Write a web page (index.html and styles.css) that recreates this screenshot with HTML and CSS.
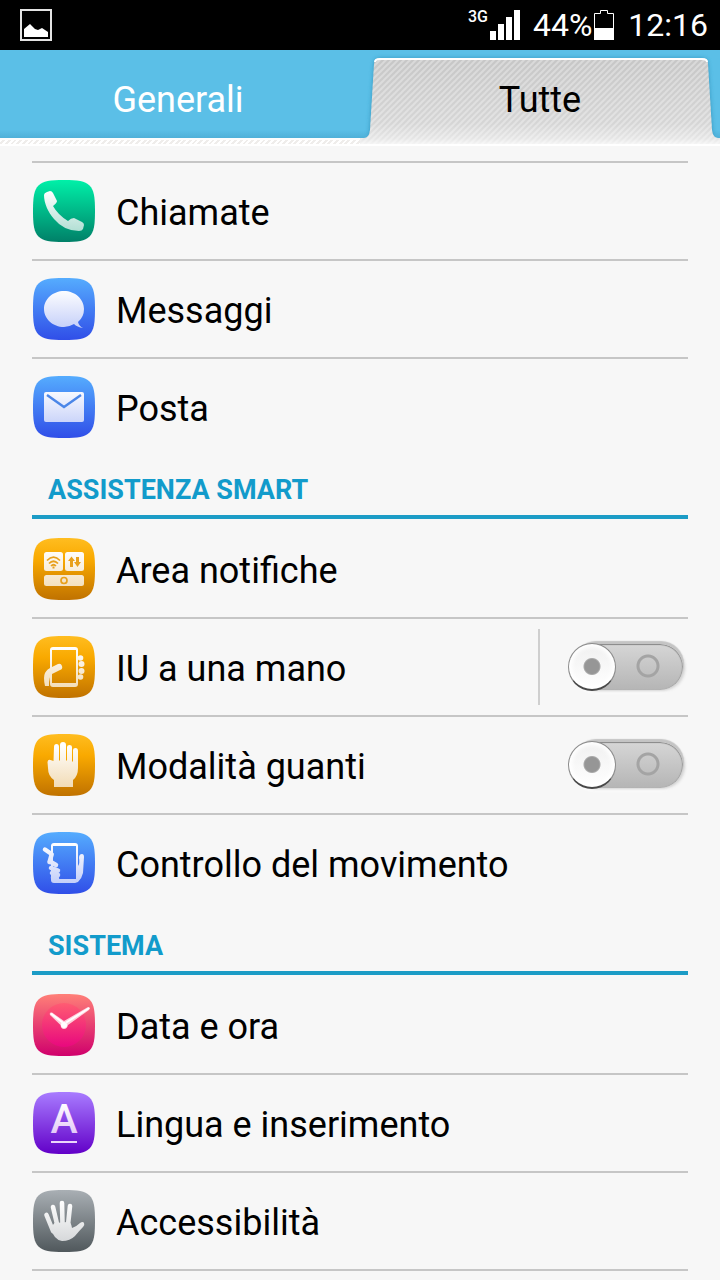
FILE: index.html
```html
<!DOCTYPE html>
<html lang="it">
<head>
<meta charset="utf-8">
<meta name="viewport" content="width=device-width, initial-scale=1">
<title>Impostazioni</title>
<link rel="stylesheet" href="styles.css">
</head>
<body>
<svg class="defs" aria-hidden="true">
  <defs>
    <linearGradient id="green" x2="0" y2="1"><stop stop-color="#00f0a8"/><stop offset="1" stop-color="#008068"/></linearGradient>
    <linearGradient id="blue" x2="0" y2="1"><stop stop-color="#55acfe"/><stop offset="1" stop-color="#304ee8"/></linearGradient>
    <linearGradient id="amber" x2="0" y2="1"><stop stop-color="#ffbd20"/><stop offset=".35" stop-color="#f9a900"/><stop offset="1" stop-color="#c07200"/></linearGradient>
    <linearGradient id="pink" x2="0" y2="1"><stop stop-color="#ff8078"/><stop offset="1" stop-color="#d0006c"/></linearGradient>
    <linearGradient id="dial" x2="0" y2="1"><stop stop-color="#ff5c72"/><stop offset="1" stop-color="#e8087e"/></linearGradient>
    <linearGradient id="violet" x2="0" y2="1"><stop stop-color="#a87cff"/><stop offset="1" stop-color="#6200c8"/></linearGradient>
    <linearGradient id="slate" x2="0" y2="1"><stop stop-color="#a9afb4"/><stop offset="1" stop-color="#50585c"/></linearGradient>
    <linearGradient id="mint" gradientUnits="userSpaceOnUse" x1="0" y1="11" x2="0" y2="51"><stop stop-color="#fff"/><stop offset="1" stop-color="#b2dfd4"/></linearGradient>
    <linearGradient id="sky" gradientUnits="userSpaceOnUse" x1="0" y1="11" x2="0" y2="51"><stop stop-color="#fff"/><stop offset="1" stop-color="#c4cff9"/></linearGradient>
    <linearGradient id="cream" gradientUnits="userSpaceOnUse" x1="0" y1="11" x2="0" y2="53"><stop stop-color="#fff"/><stop offset="1" stop-color="#f2dcb6"/></linearGradient>
    <linearGradient id="lilac" gradientUnits="userSpaceOnUse" x1="0" y1="11" x2="0" y2="51"><stop stop-color="#fff"/><stop offset="1" stop-color="#dcb8f5"/></linearGradient>
    <linearGradient id="silver" gradientUnits="userSpaceOnUse" x1="0" y1="11" x2="0" y2="51"><stop stop-color="#fff"/><stop offset="1" stop-color="#d6d8da"/></linearGradient>
    <symbol id="tile" viewBox="0 0 62 62"><path d="M31 0C45 0 52 1 56.500 5.500C61 10 62 17 62 31S61 52 56.500 56.500C52 61 45 62 31 62S10 61 5.500 56.500C1 52 0 45 0 31S1 10 5.500 5.500C10 1 17 0 31 0Z"/></symbol>
  </defs>
</svg>

<header>
  <div class="status">
    <svg class="picture" viewBox="0 0 32 32" aria-hidden="true"><rect x="1" y="1" width="30" height="30" fill="none" stroke="#e4e4e4" stroke-width="2"/><path fill="#fff" d="M4 28V20L10 15L15 20L18 21L22 19L28 23V28Z"/></svg>
    <div class="status-right">
      <span class="network">3G</span>
      <svg class="signal" viewBox="0 0 30 30" fill="#fff" aria-hidden="true"><path d="M0 21h6v9H0zM8 14h6v16H8zM16 7h6v23h-6zM24 0h6v30h-6z"/></svg>
      <span class="percent">44%</span>
      <svg class="battery" viewBox="0 0 20 30" aria-hidden="true"><path d="M.5 3.500H6.500V.5H13.500V3.500H19.500V29.500H.5Z" fill="none" stroke="#fff"/><path d="M0 18h20v12H0z" fill="#fff"/></svg>
      <time>12:16</time>
    </div>
  </div>
  <nav class="tabs">
    <button class="tab tab-general">Generali</button>
    <button class="tab tab-all" aria-current="page">
      <svg class="tab-shape" viewBox="0 0 360 96" preserveAspectRatio="none" aria-hidden="true">
        <defs>
          <linearGradient id="tabfill" x2="0" y2="1"><stop stop-color="#c6c6c6"/><stop offset=".75" stop-color="#d6d6d6"/><stop offset=".92" stop-color="#e6e6e6"/><stop offset="1" stop-color="#fafafa"/></linearGradient>
          <pattern id="weave" width="6" height="6" patternUnits="userSpaceOnUse"><path d="M-1 7L7 -1M-1 1L1 -1M5 7L7 5" stroke="#fff" stroke-opacity=".32" stroke-width="2"/></pattern>
          <filter id="soft" x="-10%" y="-10%" width="120%" height="120%"><feGaussianBlur stdDeviation="2"/></filter>
        </defs>
        <path d="M9 88L14 14Q14 8 20 8H342Q348 8 348 14L353 88Z" fill="#2787ae" opacity=".65" filter="url(#soft)"/>
        <path d="M0 88H4Q9 88 10 80L14 14Q14 8 20 8H342Q348 8 348 14L352 80Q353 88 358 88H360V96H0Z" fill="url(#tabfill)"/>
        <path d="M0 88H4Q9 88 10 80L14 14Q14 8 20 8H342Q348 8 348 14L352 80Q353 88 358 88H360V96H0Z" fill="url(#weave)"/>
        <path d="M15 12Q15 9 20 9H342Q347 9 347 12" fill="none" stroke="#fff" stroke-width="2"/>
        <path d="M0 95H360" stroke="#fff" stroke-width="2"/>
      </svg>
      <span class="tab-label">Tutte</span>
    </button>
  </nav>
</header>

<main>
  <section class="group group-first">
    <ul>
      <li class="row"><a class="entry" href="#chiamate">
        <svg class="icon" viewBox="0 0 62 62" aria-hidden="true"><use href="#tile" fill="url(#green)"/><path fill="url(#mint)" d="M14 12L17 11Q19 11 20 13L24 21Q24 23 20 26Q25 35 35 41Q38 38 41 38L49 42Q51 43 51 45L50 49Q49 51 46 51Q31 51 21 39C15 32 11 23 11 15Q11 13 14 12Z"/></svg>
        <span>Chiamate</span></a></li>
      <li class="row"><a class="entry" href="#messaggi">
        <svg class="icon" viewBox="0 0 62 62" aria-hidden="true"><use href="#tile" fill="url(#blue)"/><path fill="url(#sky)" d="M31 13C42 13 51 21 51 31Q51 39 45 44Q46 48 50 50Q44 49 41 46Q36 49 31 49C20 49 11 41 11 31S20 13 31 13Z"/></svg>
        <span>Messaggi</span></a></li>
      <li class="row"><a class="entry" href="#posta">
        <svg class="icon" viewBox="0 0 62 62" aria-hidden="true"><use href="#tile" fill="url(#blue)"/><rect x="11" y="16" width="40" height="30" rx="2" fill="url(#sky)"/><path d="M14 19L31 31L48 19" fill="none" stroke="#4b86e8" stroke-width="2.400"/></svg>
        <span>Posta</span></a></li>
    </ul>
  </section>

  <section class="group">
    <h2>ASSISTENZA SMART</h2>
    <ul>
      <li class="row"><a class="entry" href="#notifiche">
        <svg class="icon" viewBox="0 0 62 62" aria-hidden="true"><use href="#tile" fill="url(#amber)"/><g fill="url(#cream)"><rect x="11" y="14" width="19" height="19" rx="2.500"/><rect x="32" y="14" width="19" height="19" rx="2.500"/><rect x="11" y="37" width="40" height="11" rx="2.500"/></g><g fill="none" stroke="#e8a01c" stroke-width="1.700"><path d="M14 22.500Q20.500 16 27 22.500M16 25.500Q20.500 21 25 25.500M18 28Q20.500 25.500 23 28"/><circle cx="31" cy="42.500" r="3"/></g><path fill="#e8a01c" d="M19.500 28.500h2v2h-2zM38.500 18.500L42 23H40V29H37V23H35ZM44.500 29L48 24H46V19H43V24H41Z"/></svg>
        <span>Area notifiche</span></a></li>
      <li class="row"><a class="entry" href="#mano">
        <svg class="icon" viewBox="0 0 62 62" aria-hidden="true"><use href="#tile" fill="url(#amber)"/><path fill="url(#cream)" fill-rule="evenodd" d="M20 11H42Q45 11 45 14V48Q45 51 42 51H20Q17 51 17 48V14Q17 11 20 11ZM19 14V47H43V14Z"/><path fill="url(#cream)" d="M12 50Q10 41 12 37Q14 33 19 31L25 28Q28 27 29 30T27 34L19 38Q16 40 16 50Z"/><g fill="url(#cream)"><circle cx="47.500" cy="22" r="2.800"/><circle cx="48.500" cy="28" r="3"/><circle cx="48.500" cy="35" r="3"/><circle cx="47.500" cy="41" r="2.800"/></g></svg>
        <span>IU a una mano</span></a>
        <div class="switch-cell"><input class="switch" type="checkbox" role="switch" aria-label="IU a una mano"></div></li>
      <li class="row"><label class="entry" for="guanti">
        <svg class="icon" viewBox="0 0 62 62" aria-hidden="true"><use href="#tile" fill="url(#amber)"/><path fill="url(#cream)" d="M21 53V46Q15 42 15 34L14.500 28Q15 25 17.500 26L20.500 27L21 13Q21 10 23.500 10T26 13V26.500H27V11Q27 8 30 8T33 11V26.500H34V13Q34 11 36.500 11T39 13V27.500H40V16Q40 14 42.500 14T45 17V34Q45 42 40 46V53Z"/></svg>
        <span>Modalità guanti</span></label>
        <div class="switch-cell switch-cell-plain"><input id="guanti" class="switch" type="checkbox" role="switch"></div></li>
      <li class="row"><a class="entry" href="#movimento">
        <svg class="icon" viewBox="0 0 62 62" aria-hidden="true"><use href="#tile" fill="url(#blue)"/><path fill="url(#sky)" fill-rule="evenodd" d="M21 11H42Q45 11 45 14V34Q47 31 46 26Q46 22 49 22Q51 22 51 25L50 41Q49 46 45 50L42 51H21Q18 51 18 48V14Q18 11 21 11ZM20 14V47H43V14Z"/><g fill="none" stroke="url(#sky)" stroke-linecap="round" stroke-width="4.500"><path d="M12 17.500L18.500 22M17 29.500L23 33M18 36L25 38.500M19 41L25 43M20 45.500L24 46.500"/><path d="M18.500 23L16.500 30"/></g></svg>
        <span>Controllo del movimento</span></a></li>
    </ul>
  </section>

  <section class="group">
    <h2>SISTEMA</h2>
    <ul>
      <li class="row"><a class="entry" href="#data">
        <svg class="icon" viewBox="0 0 62 62" aria-hidden="true"><use href="#tile" fill="url(#pink)"/><circle cx="31" cy="31" r="22" fill="url(#dial)"/><path fill="#ffd0dc" d="M17 21Q16 18 19 18.500L31 27L55 13Q58 13 56 16L35 31Q34 35 31 35T27.500 31Z"/><circle cx="31" cy="31" r="3" fill="#fff"/><path d="M18.500 20L29 28M55.500 14.500L34 28" stroke="#fff" stroke-width="2" stroke-linecap="round"/></svg>
        <span>Data e ora</span></a></li>
      <li class="row"><a class="entry" href="#lingua">
        <svg class="icon" viewBox="0 0 62 62" aria-hidden="true"><use href="#tile" fill="url(#violet)"/><text class="letter" x="31" y="41" text-anchor="middle" fill="url(#lilac)">A</text><path fill="#ecd6fa" d="M18 49h26v2H18z"/></svg>
        <span>Lingua e inserimento</span></a></li>
      <li class="row"><a class="entry" href="#accessibilita">
        <svg class="icon" viewBox="0 0 62 62" aria-hidden="true"><use href="#tile" fill="url(#slate)"/><g fill="none" stroke="url(#silver)" stroke-width="4.600" stroke-linecap="round"><path d="M13.500 25L20 41M20 17L24 34M29 13L29.500 34M37 16L35 35"/></g><path fill="url(#silver)" d="M17.500 38L21.500 33L35 32Q38 31 39 38Q43 37 47 33Q50 31 51 33T50 37Q46 41 42 46Q37 51 29 51Q21 50 17.500 38Z"/></svg>
        <span>Accessibilità</span></a></li>
    </ul>
  </section>
</main>
</body>
</html>
```
FILE: styles.css
```css
*, *::before, *::after { box-sizing: border-box; }

body {
  margin: 0;
  background: #f7f7f7;
  color: #000;
  font-family: Roboto, "Noto Sans", sans-serif;
  font-size: 36px;
  overflow-x: hidden;
}

.defs { position: absolute; width: 0; height: 0; }

.status {
  display: flex;
  align-items: center;
  justify-content: space-between;
  height: 50px;
  padding: 0 12px 0 20px;
  background: #000;
  color: #fff;
}

.picture { width: 32px; height: 32px; }

.status-right {
  display: flex;
  align-items: center;
  font-size: 32px;
  line-height: 50px;
}

.network {
  align-self: flex-start;
  padding-top: 8px;
  margin-right: 2px;
  font-size: 16px;
  font-weight: 500;
  line-height: 18px;
}

.signal { width: 30px; height: 30px; margin-right: 13px; }
.battery { width: 20px; height: 30px; margin: 0 14px 0 2px; }

.tabs {
  display: flex;
  height: 96px;
  background:
    linear-gradient(#fff, #fff) bottom / 100% 2px no-repeat,
    repeating-linear-gradient(135deg, #fff 0 2px, #efedeb 2px 4px) bottom / 100% 6px no-repeat,
    linear-gradient(#5bbfe7 80px, #4fb0d8 88px, #fdfdfd 88px);
}

.tab {
  position: relative;
  width: 50%;
  padding: 4px 0 0;
  border: 0;
  background: none;
  color: inherit;
  font: inherit;
  cursor: pointer;
}

.tab-general { padding-right: 4px; color: #fff; }

.tab-shape {
  position: absolute;
  inset: 0;
  width: 100%;
  height: 100%;
}

.tab-label { position: relative; }

.group { padding: 0 32px; }

.group-first { padding-top: 15px; }
.group-first ul { border-top: 2px solid #c6c6c6; }

h2 {
  height: 64px;
  margin: 0 0 2px;
  padding: 4px 16px 0;
  border-bottom: 4px solid #1c9cc6;
  color: #129bcb;
  font-size: 27px;
  font-weight: 700;
  line-height: 62px;
}

ul { margin: 0; padding: 0; list-style: none; }

.row {
  display: flex;
  align-items: center;
  height: 98px;
  border-bottom: 2px solid #c6c6c6;
}

.group:not(:last-child) .row:last-child { height: 96px; border-bottom: 0; }

.entry {
  display: flex;
  flex: 1;
  align-items: center;
  gap: 21px;
  height: 96px;
  padding-left: 1px;
  color: inherit;
  text-decoration: none;
}

.entry span { padding-top: 4px; }

.icon { flex: none; width: 62px; height: 62px; }
.letter { font-size: 41px; font-weight: 500; }

.switch-cell {
  display: flex;
  align-items: center;
  height: 76px;
  padding: 0 4px 0 28px;
  border-left: 2px solid #cfcfcf;
}

.switch-cell-plain { border-left-color: transparent; }

.switch {
  position: relative;
  width: 116px;
  height: 48px;
  margin: 0;
  appearance: none;
  cursor: pointer;
}

.switch::before {
  content: "";
  position: absolute;
  inset: 1px 1px 1px 4px;
  border-radius: 23px;
  background:
    radial-gradient(circle at 76px 22px, transparent 8px, #a4a4a4 9px 11px, transparent 12px),
    linear-gradient(#d6d6d6, #b5b5b5);
  box-shadow:
    inset 0 1px 1px #858585,
    inset -1px 0 1px #a0a0a0,
    1px -3px 1px #c4c4c4,
    2px 1px 3px #d0d0d0,
    0 3px 3px #fff;
}

.switch::after {
  content: "";
  position: absolute;
  top: 0;
  left: 0;
  width: 48px;
  height: 48px;
  border: 1px solid #8c8c8c;
  border-bottom: 2px solid #484848;
  border-radius: 50%;
  background:
    radial-gradient(circle, #969696 7px, #aaa 8px, transparent 9px),
    linear-gradient(#f0f0f0, #fff);
  box-shadow: inset 0 0 4px 3px #fff;
}

.switch:checked::after { left: 68px; }
```
